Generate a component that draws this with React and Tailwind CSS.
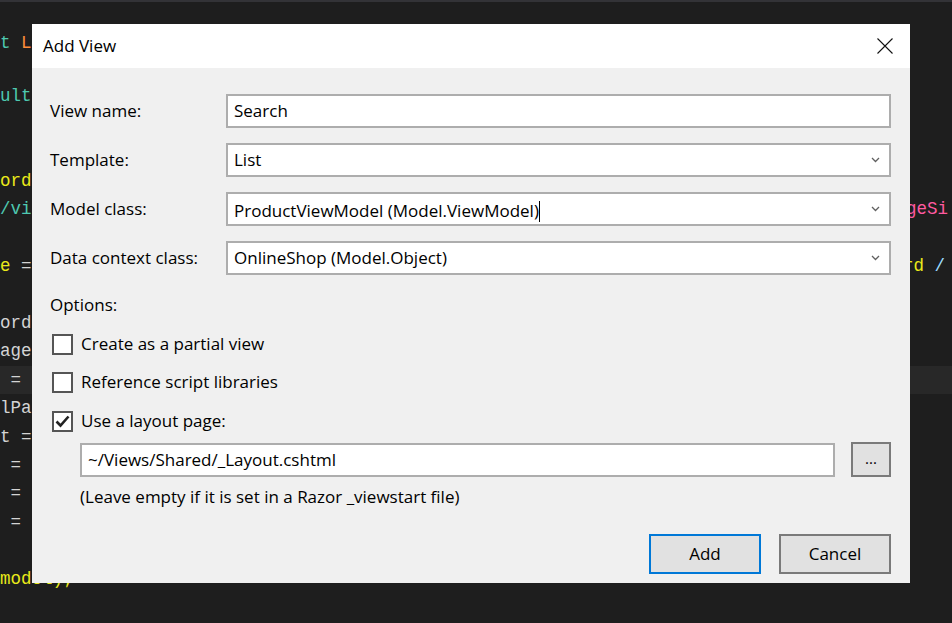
import React from 'react';

const C = {
  txt: 'text-[#d4d4d4]',
  teal: 'text-[#4ec9b0]',
  orange: 'text-[#ff8c3a]',
  yellow: 'text-[#eaea1a]',
  pink: 'text-[#ff5aa0]',
  blue: 'text-[#9cdcfe]',
};

// code lines behind the dialog, 28.4px tall each
const codeLines = [
  { left: [['ult', C.teal]] },
  {},
  {},
  { left: [['ord', C.yellow]] },
  { left: [['/vie', C.teal]], right: [['geSi', C.pink]], gap: 'w-[906px]' },
  {},
  { left: [['e', C.yellow], [' =', C.txt]], right: [['rd', C.yellow], [' /', C.blue]], gap: 'w-[903px]' },
  {},
  { left: [['ord', C.txt]] },
  { left: [['age', C.txt]] },
  { left: [[' =', C.txt]], hl: true },
  { left: [['lPa', C.txt]] },
  { left: [['t =', C.txt]] },
  { left: [[' =', C.txt]] },
  { left: [[' =', C.txt]] },
  { left: [[' =', C.txt]] },
  {},
  { left: [['model);', C.yellow]] },
];

function CodeLine({ line }) {
  return (
    <div className={`flex h-[28.4px] items-center overflow-hidden whitespace-pre ${line.hl ? 'bg-[#282828]' : ''}`}>
      <span className={`shrink-0 ${line.gap || 'w-0'}`}>
        {(line.left || []).map(([t, c], i) => (
          <span key={i} className={c}>{t}</span>
        ))}
      </span>
      {line.right && (
        <span className="shrink-0">
          {line.right.map(([t, c], i) => (
            <span key={i} className={c}>{t}</span>
          ))}
        </span>
      )}
    </div>
  );
}

function Chevron() {
  return (
    <svg width="9" height="6" viewBox="0 0 9 6" className="shrink-0">
      <path d="M1 1 L4.5 4.5 L8 1" fill="none" stroke="#606060" strokeWidth="1.3" />
    </svg>
  );
}

function Field({ label, value, select, caret }) {
  return (
    <div className="flex items-center">
      <div className="w-[176px] shrink-0">{label}</div>
      <div className="flex h-[34px] flex-1 items-center border-2 border-[#adadad] bg-white pl-[6px] pr-[9px]">
        <span className="flex-1 whitespace-nowrap">
          {value}
          {caret && <span className="inline-block h-[21px] w-px translate-y-[5px] bg-black" />}
        </span>
        {select && <Chevron />}
      </div>
    </div>
  );
}

function Check({ checked, label, className }) {
  return (
    <div className={`flex h-[22px] items-center ${className}`}>
      <div className="ml-[2px] flex h-[21px] w-[21px] shrink-0 items-center justify-center border-2 border-[#555555] bg-white">
        {checked && (
          <svg width="15" height="13" viewBox="0 0 15 13">
            <path d="M1.5 6.5 L5.5 10.5 L13.5 1.5" fill="none" stroke="#222" strokeWidth="2.6" />
          </svg>
        )}
      </div>
      <span className="ml-[8px]">{label}</span>
    </div>
  );
}

export default function App() {
  return (
    <div className="relative h-[623px] w-[952px] overflow-hidden bg-[#1e1e1e] font-['Liberation_Mono',monospace] text-[17.5px]">
      <div className="h-[2px] bg-[#333337]" />
      <div className="h-[27px]" />
      <div className="flex h-[28px] items-center whitespace-pre">
        <span className={C.teal}>t</span>
        <span> </span>
        <span className={C.orange}>L</span>
      </div>
      <div className="h-[24.8px]" />
      {codeLines.map((l, i) => (
        <CodeLine key={i} line={l} />
      ))}

      {/* dialog window */}
      <div className="absolute left-[32px] top-[24px] flex h-[559px] w-[878px] flex-col bg-[#f0f0f0] font-['Open_Sans',sans-serif] text-[17px] leading-[22px] text-black">
        <div className="flex h-[44px] shrink-0 items-center justify-between bg-white pl-[11px] pr-[17px]">
          <span className="text-[17px]">Add View</span>
          <svg width="16" height="16" viewBox="0 0 16 16">
            <path d="M0.5 0.5 L15.5 15.5 M15.5 0.5 L0.5 15.5" stroke="#111" strokeWidth="1.1" />
          </svg>
        </div>

        <div className="flex flex-1 flex-col pl-[18px] pr-[19px] pt-[26px]">
          <div className="flex flex-col gap-[15px]">
            <Field label="View name:" value="Search" />
            <Field label="Template:" value="List" select />
            <Field label="Model class:" value="ProductViewModel (Model.ViewModel)" select caret />
            <Field label="Data context class:" value="OnlineShop (Model.Object)" select />
          </div>

          <div className="mt-[19px] h-[22px]">Options:</div>
          <Check className="mt-[17px]" label="Create as a partial view" />
          <Check className="mt-[16px]" label="Reference script libraries" />
          <Check className="mt-[17px]" label="Use a layout page:" checked />

          <div className="mt-[10px] flex items-center pl-[30px]">
            <div className="flex h-[34px] flex-1 items-center border-2 border-[#adadad] bg-white pl-[6px]">
              ~/Views/Shared/_Layout.cshtml
            </div>
            <button className="ml-[16px] flex h-[35px] w-[40px] items-center justify-center border-2 border-[#7a7a7a] bg-[#e1e1e1] pb-[4px] text-[15px]">
              ...
            </button>
          </div>
          <div className="mt-[9px] h-[22px] pl-[30px]">
            (Leave empty if it is set in a Razor _viewstart file)
          </div>

          <div className="mt-auto mb-[9px] flex justify-end gap-[18px]">
            <button className="h-[40px] w-[112px] border-2 border-[#0078d7] bg-[#e1e1e1]">Add</button>
            <button className="h-[40px] w-[112px] border-2 border-[#7a7a7a] bg-[#e1e1e1]">Cancel</button>
          </div>
        </div>
      </div>
    </div>
  );
}
